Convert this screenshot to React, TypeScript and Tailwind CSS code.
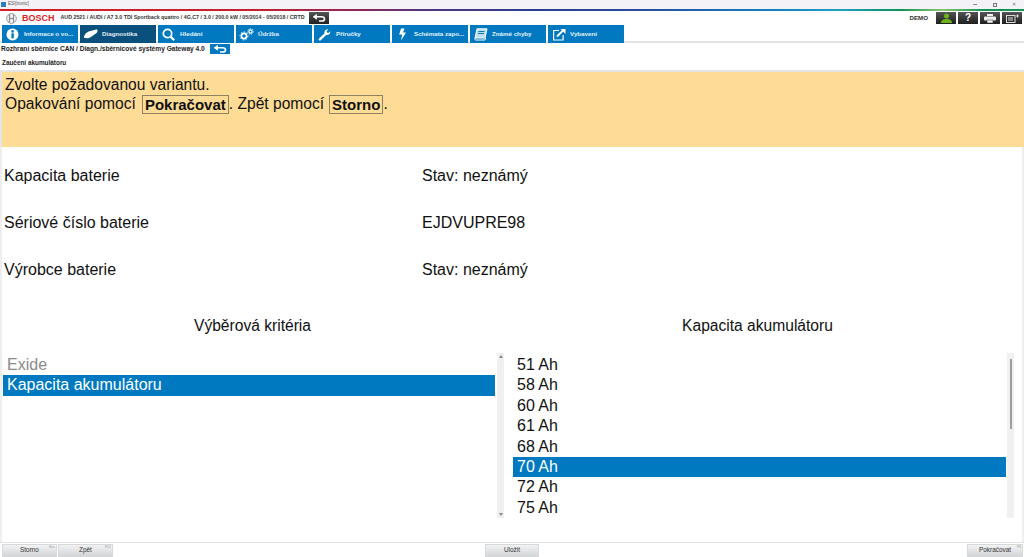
const F = "[font-family:'Liberation_Sans',Arial,sans-serif]";

function Back({ dark, w }: { dark?: boolean; w: string }) {
  return (
    <div className={`${w} flex items-center justify-center ${dark ? "h-[12px] bg-gradient-to-b from-[#555] to-[#222]" : "bg-[#0079c1]"}`}>
      <svg width="14" height="8" viewBox="0 0 14 8" fill="none" stroke="#fff" strokeWidth="1.6">
        <path d="M1.5 2.800h8q3 0 3 2.100t-3 2.100H7" />
        <path d="M4.500 .4 1.500 2.800l3 2.400Z" fill="#fff" strokeWidth=".8" />
      </svg>
    </div>
  );
}

const I = { fill: "#fff" };
const tabs: { label: string; active?: boolean; icon: React.ReactNode }[] = [
  { label: "Informace o vo...", icon: (
    <svg width="13" height="13" viewBox="0 0 13 13"><circle cx="6.500" cy="6.500" r="6" {...I} /><rect x="5.400" y="5.300" width="2.400" height="5" fill="#0079c1" /><circle cx="6.600" cy="3.400" r="1.300" fill="#0079c1" /></svg>
  ) },
  { label: "Diagnostika", active: true, icon: (
    <svg width="16" height="12" viewBox="0 0 16 12"><path d="M1 10C1 6 5 3 9 2.500L15 .8c.8 1.200.6 3-.6 4.200L10 8c-3 2.500-6 3-9 2Z" {...I} /></svg>
  ) },
  { label: "Hledání", icon: (
    <svg width="13" height="13" viewBox="0 0 13 13" fill="none" stroke="#fff" strokeWidth="1.700"><circle cx="5.500" cy="5.500" r="4.200" /><path d="m8.600 8.600 3.600 3.600" strokeWidth="2.200" /></svg>
  ) },
  { label: "Údržba", icon: (
    <svg width="15" height="13" viewBox="0 0 15 13" fill="none" stroke="#fff"><circle cx="5" cy="8" r="2.600" strokeWidth="1.600" /><circle cx="5" cy="8" r="4" strokeWidth="1" strokeDasharray="1.500 1.500" /><circle cx="11.500" cy="3.500" r="1.600" strokeWidth="1.200" /><circle cx="11.500" cy="3.500" r="2.800" strokeWidth=".9" strokeDasharray="1.200 1.200" /></svg>
  ) },
  { label: "Příručky", icon: (
    <svg width="13" height="13" viewBox="0 0 13 13"><path d="M1 10.600 6.400 5.400C5.900 3.400 7.600 1 10.400 1.300L8.600 3.200l.4 1.400 1.400.4L12.300 3.200c.4 2.700-2 4.400-4.100 3.800L2.800 12.300a1.200 1.200 0 0 1-1.800-1.700Z" {...I} /></svg>
  ) },
  { label: "Schémata zapo...", icon: (
    <svg width="9" height="13" viewBox="0 0 9 13"><path d="M3 .5h3.500L5 4.500h3L3 12.500 4.200 6.500H1.200Z" {...I} /></svg>
  ) },
  { label: "Známé chyby", icon: (
    <svg width="14" height="13" viewBox="0 0 14 13" fill="none" stroke="#fff"><path d="M3 .8h10L11 10H1Z" fill="#fff" fillOpacity=".75" /><path d="M1 10c-.6 1.200 0 2 1 2h9l.5-2" /><path d="M4.500 3.500h6M4 5.500h6" stroke="#0079c1" /></svg>
  ) },
  { label: "Vybavení", icon: (
    <svg width="14" height="13" viewBox="0 0 14 13" fill="none" stroke="#fff" strokeWidth="1.200"><path d="M7 2.500H1.600v9.500h9.500V7" /><path d="m5 8.500 6-6" strokeWidth="1.800" /><path d="M8.500 1h5v5Z" fill="#fff" stroke="none" /></svg>
  ) },
];

function ToolBtn({ children }: { children: React.ReactNode }) {
  return <div className="w-[20px] h-[12px] flex items-center justify-center bg-gradient-to-b from-[#555] to-[#1f1f1f]">{children}</div>;
}

function FootBtn({ label, k, w }: { label: string; k?: string; w: string }) {
  return (
    <div className={`relative ${w} h-[13px] flex items-center justify-center text-[6.400px] text-[#333] bg-gradient-to-b from-[#f2f3f3] to-[#d3d6d8] border border-[#d6d8d9]`}>
      {label}
      {k && <span className="absolute right-[1px] top-0 text-[3.500px] leading-[5px] text-[#999]">{k}</span>}
    </div>
  );
}

function Row({ a, b }: { a: string; b: string }) {
  return (
    <div className="h-[47px] flex items-center pl-[2px] text-[16px] text-[#111]">
      <div className="w-[418px]">{a}</div>
      <div>{b}</div>
    </div>
  );
}

function Scrollbar({ thumb }: { thumb?: boolean }) {
  return (
    <div className="w-[7px] h-[165px] bg-[#f0f0f0] flex flex-col items-center justify-between py-[2px]">
      <div className={thumb ? "w-0 h-0" : "w-0 h-0 border-x-[2px] border-x-transparent border-b-[3px] border-b-[#888]"} />
      {thumb && <div className="w-[2px] h-[70px] bg-[#9e9e9e] mt-[4px]" />}
      <div className={thumb ? "mt-auto w-0 h-0" : "w-0 h-0 border-x-[2px] border-x-transparent border-t-[3px] border-t-[#888]"} />
    </div>
  );
}

export default function App() {
  const caps = ["51 Ah", "58 Ah", "60 Ah", "61 Ah", "68 Ah", "70 Ah", "72 Ah", "75 Ah"];
  return (
    <div className={`${F} w-[1024px] h-[557px] overflow-hidden bg-white flex flex-col relative`}>
      {/* window title */}
      <div className="h-[9px] bg-[#f4f2f6] flex items-center">
        <div className="w-[5px] h-[5px] ml-[1px] bg-[#2a7fc0]" />
        <span className="ml-[2px] text-[4.500px] text-[#555]">ESI[tronic]</span>
        <div className="ml-auto flex items-center text-[#777] mr-[8px]">
          <span className="w-[4px] h-px bg-[#888] mr-[16px]" />
          <span className="w-[4px] h-[4px] border border-[#777] mr-[15px]" />
          <span className="text-[5px] leading-none">✕</span>
        </div>
      </div>
      <div className="h-[2px] bg-[linear-gradient(90deg,#d42027_0%,#c3202f_25%,#9b2450_33%,#50357f_42%,#2c3f8f_52%,#2a4a9a_62%,#127fc0_75%,#20a0c0_82%,#10957a_86%,#0f9455_88%,#8ac56e_92%,#0f9455_96%,#0f9455_100%)]" />

      {/* vehicle header */}
      <div className="h-[14px] flex items-center">
        <svg className="ml-[6px]" width="11" height="11" viewBox="0 0 11 11" fill="none" stroke="#8b8f93">
          <circle cx="5.500" cy="5.500" r="4.800" strokeWidth="1" />
          <path d="M3.500 1.500v8M7.500 1.500v8M3.500 5.500h4" strokeWidth="1.400" />
        </svg>
        <span className="ml-[5px] text-[9px] font-bold text-[#d8232a] leading-none">BOSCH</span>
        <span className="ml-[6px] w-[248px] text-[5.300px] font-bold text-[#333] whitespace-nowrap">AUD 2521 / AUDI / A7 3.0 TDI Sportback quattro / 4G,C7 / 3.0 / 200.0 kW / 05/2014 - 05/2018 / CRTD</span>
        <Back dark w="w-[20px]" />
        <span className="ml-auto mr-[8px] text-[6.200px] font-bold text-[#333]">DEMO</span>
        <div className="flex gap-[2px] mr-[2px]">
          <ToolBtn>
            <svg width="13" height="10" viewBox="0 0 13 10"><circle cx="6.500" cy="3" r="2.500" fill="#6db31c" /><path d="M1 10c0-3 2.500-4 5.500-4s5.500 1 5.500 4Z" fill="#6db31c" /></svg>
          </ToolBtn>
          <ToolBtn><span className="text-[10px] font-bold text-white leading-none">?</span></ToolBtn>
          <ToolBtn>
            <svg width="12" height="9" viewBox="0 0 12 9" fill="#eee"><rect x="3" width="6" height="2" /><rect y="2.500" width="12" height="4" rx="1" /><rect x="3" y="6" width="6" height="3" stroke="#333" strokeWidth=".5" /></svg>
          </ToolBtn>
          <ToolBtn>
            <svg width="13" height="9" viewBox="0 0 13 9" fill="none" stroke="#ddd"><rect x=".5" y="1.500" width="8.500" height="7" /><path d="M2 4h5M2 6h5" /><path d="M10 2h3M11.500 .5v3" /></svg>
          </ToolBtn>
        </div>
      </div>

      {/* tabs */}
      <div className="h-[18px] relative flex items-stretch pl-[2px] gap-[2px]">
        <div className="absolute left-0 right-0 bottom-0 h-[2px] bg-[#e3e3e3]" />
        {tabs.map((t) => (
          <div key={t.label} className={`w-[76px] relative flex items-center pl-[3px] overflow-hidden ${t.active ? "bg-[#0b4f7c]" : "bg-[#0079c1]"}`}>
            <span className="w-[15px] flex justify-center shrink-0">{t.icon}</span>
            <span className="ml-[4px] text-[6.200px] font-bold text-white/90 whitespace-nowrap">{t.label}</span>
          </div>
        ))}
      </div>

      {/* breadcrumb */}
      <div className="h-[12px] flex items-center pl-[1px] text-[6.600px] font-bold text-[#222]">
        <span>Rozhraní sběrnice CAN / Diagn./sběrnicové systémy Gateway 4.0</span>
        <Back w="w-[20px] ml-[5px] h-[10px]" />
      </div>
      <div className="h-[15px] pl-[2px] flex items-center text-[6.400px] font-bold text-[#222]">Zaučení akumulátoru</div>

      {/* message */}
      <div className="h-[77px] border-t-2 border-l-2 border-[#e4e4e4] bg-[#fedc96] pl-[3px] pt-[3px] text-[15.600px] leading-[19.400px] text-[#111]">
        <div>Zvolte požadovanou variantu.</div>
        <div className="flex items-center">
          <span>Opakování pomocí</span>
          <b className="ml-[6px] border border-[#8f8262] px-[2px] leading-[17px] text-[15px]">Pokračovat</b>
          <span>. Zpět pomocí</span>
          <b className="ml-[5px] border border-[#8f8262] px-[2px] leading-[17px] text-[15px]">Storno</b>
          <span>.</span>
        </div>
      </div>

      {/* main */}
      <div className="flex-1 flex flex-col border-x-2 border-[#eeeeee]">
        <div className="pt-[5px]">
          <Row a="Kapacita baterie" b="Stav: neznámý" />
          <Row a="Sériové číslo baterie" b="EJDVUPRE98" />
          <Row a="Výrobce baterie" b="Stav: neznámý" />
        </div>
        <div className="flex mt-[24px] h-[18px] text-[15.600px] text-[#111] items-center">
          <div className="w-[501px] text-center">Výběrová kritéria</div>
          <div className="w-[509px] text-center">Kapacita akumulátoru</div>
        </div>
        <div className="flex mt-[18px] pl-[1px]">
          <div className="w-[492px] pt-[2px] text-[16px] leading-[20.400px]">
            <div className="pl-[4px] text-[#8a8a8a]">Exide</div>
            <div className="pl-[4px] bg-[#0079c1] text-white">Kapacita akumulátoru</div>
          </div>
          <div className="ml-[2px]"><Scrollbar /></div>
          <div className="w-[493px] ml-[9px] pt-[2px] text-[16px] leading-[20.400px] text-[#111]">
            {caps.map((c) => (
              <div key={c} className={`pl-[4px] ${c === "70 Ah" ? "bg-[#0079c1] text-white" : ""}`}>{c}</div>
            ))}
          </div>
          <div className="ml-[1px]"><Scrollbar thumb /></div>
        </div>
      </div>

      {/* footer */}
      <div className="h-[15px] border-t border-[#e2e2e2] flex items-center pl-[2px] pr-[1px]">
        <FootBtn label="Storno" k="Esc" w="w-[55px]" />
        <div className="w-[1px]" />
        <FootBtn label="Zpět" k="F12" w="w-[55px]" />
        <div className="ml-[372px]"><FootBtn label="Uložit" w="w-[54px]" /></div>
        <div className="ml-auto"><FootBtn label="Pokračovat" k="F9" w="w-[56px]" /></div>
      </div>
    </div>
  );
}
